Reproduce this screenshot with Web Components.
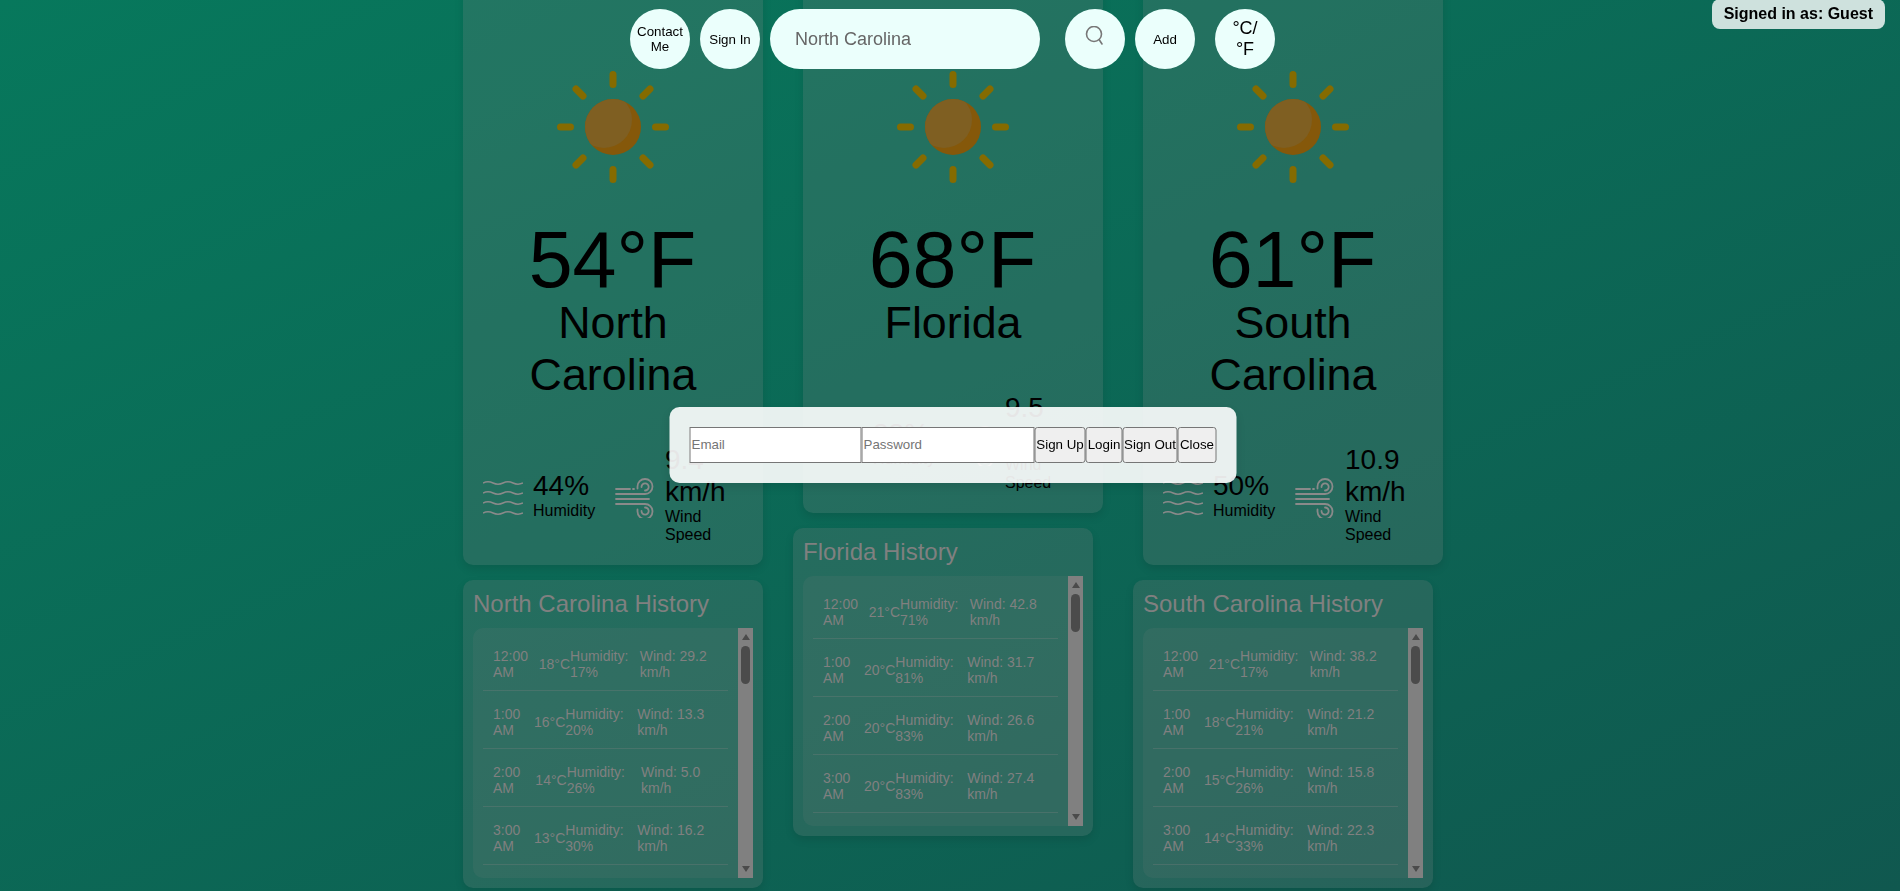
<!DOCTYPE html>
<html lang="en">
<head>
<meta charset="utf-8">
<title>Weather</title>
<style>
html, body { margin: 0; height: 100%; overflow: hidden; }
body {
    font-family: "Liberation Sans", Arial, sans-serif;
    background: linear-gradient(156deg, #07785c, #10584f);
}
</style>
</head>
<body>
<weather-app></weather-app>

<script>
const SUN_ICON = `
<svg width="150" height="150" viewBox="-75 -75 150 150">
    <defs><clipPath id="disc"><circle r="28"></circle></clipPath></defs>
    <g stroke="#856b00" stroke-width="7" stroke-linecap="round">
        <path d="M0 -52.5V-42.5M0 42.5V52.5M-52.5 0H-42.5M42.5 0H52.5"></path>
        <path d="M-37 -38L-30 -31M37 -38L30 -31M-37 38L-30 31M37 38L30 31"></path>
    </g>
    <circle r="28" fill="#85580a"></circle>
    <circle cx="-9" cy="-7" r="28" fill="#7f5f22" clip-path="url(#disc)"></circle>
</svg>`;

const WATER_ICON = `
<svg width="40" height="34" viewBox="0 0 40 34" fill="none" stroke="#8a8a8a" stroke-width="1.4">
    <path d="M0 2q5 -2.4 10 0t10 0t10 0t10 0"></path>
    <path d="M0 12q5 -2.4 10 0t10 0t10 0t10 0"></path>
    <path d="M0 22q5 -2.4 10 0t10 0t10 0t10 0"></path>
    <path d="M0 32q5 -2.4 10 0t10 0t10 0t10 0"></path>
</svg>`;

const WIND_ICON = `
<svg width="40" height="40" viewBox="0 0 40 40" fill="none" stroke="#8a8a8a" stroke-width="1.8" stroke-linecap="round">
    <path d="M1 11H15M18 11H19"></path>
    <path d="M1 16H30a7.5 7.5 0 1 0 -7.5 -7.5v2"></path>
    <path d="M26.5 9a3.6 3.6 0 1 1 3.5 3.5"></path>
    <path d="M1 21H34"></path>
    <path d="M1 26H30a7.5 7.5 0 1 1 -7.5 7.5v-2"></path>
    <path d="M26.5 33a3.6 3.6 0 1 0 3.5 -3.5"></path>
</svg>`;

const SEARCH_ICON = `
<svg width="24" height="24" viewBox="0 0 24 24" fill="none" stroke="#777" stroke-width="1.6" stroke-linecap="round">
    <circle cx="11" cy="8" r="7.5"></circle>
    <path d="M16.2 13.7L19 18"></path>
</svg>`;

const LOCATIONS = [
    {
        name: "North Carolina", temp: "54°F", humidity: "44%", wind: "9.4 km/h", offset: 0,
        history: [
            ["12:00 AM", "18°C", "17%", "29.2"],
            ["1:00 AM", "16°C", "20%", "13.3"],
            ["2:00 AM", "14°C", "26%", "5.0"],
            ["3:00 AM", "13°C", "30%", "16.2"]
        ]
    },
    {
        name: "Florida", temp: "68°F", humidity: "88%", wind: "9.5 km/h", offset: -10,
        history: [
            ["12:00 AM", "21°C", "71%", "42.8"],
            ["1:00 AM", "20°C", "81%", "31.7"],
            ["2:00 AM", "20°C", "83%", "26.6"],
            ["3:00 AM", "20°C", "83%", "27.4"]
        ]
    },
    {
        name: "South Carolina", temp: "61°F", humidity: "50%", wind: "10.9 km/h", offset: -10,
        history: [
            ["12:00 AM", "21°C", "17%", "38.2"],
            ["1:00 AM", "18°C", "21%", "21.2"],
            ["2:00 AM", "15°C", "26%", "15.8"],
            ["3:00 AM", "14°C", "33%", "22.3"]
        ]
    }
];

class RoundButton extends HTMLElement {
    constructor () {
        super();
        this.attachShadow({mode: "open"});
        this.shadowRoot.innerHTML = `
        <style>
        :host { display: block; flex: none; }
        button {
            display: flex;
            align-items: center;
            justify-content: center;
            width: 60px;
            height: 60px;
            padding: 0 6px;
            border: none;
            border-radius: 50%;
            background: #ebfffc;
            color: #000;
            font: 13.33px "Liberation Sans", Arial, sans-serif;
        }
        :host([large]) button { font-size: 18px; }
        </style>
        <button><span><slot></slot></span></button>
        `;
    }
}

class SearchBar extends HTMLElement {
    constructor () {
        super();
        this.attachShadow({mode: "open"});
        this.shadowRoot.innerHTML = `
        <style>
        :host {
            display: flex;
            justify-content: center;
            position: fixed;
            top: 9px;
            left: 5px;
            right: 0;
            z-index: 5;
        }
        .gap10 { margin-left: 10px; }
        .gap20 { margin-left: 20px; }
        .gap25 { margin-left: 25px; }
        input {
            box-sizing: border-box;
            width: 270px;
            height: 60px;
            margin-left: 10px;
            padding: 0 25px;
            border: none;
            border-radius: 30px;
            background: #ebfffc;
            color: #666;
            font: 18px "Liberation Sans", Arial, sans-serif;
            outline: none;
        }
        </style>
        <round-button>Contact Me</round-button>
        <round-button class="gap10">Sign In</round-button>
        <input type="text" value="North Carolina" aria-label="Search">
        <round-button class="gap25">${SEARCH_ICON}</round-button>
        <round-button class="gap10">Add</round-button>
        <round-button class="gap20" large>°C/<br>°F</round-button>
        `;
    }
}

class UserBadge extends HTMLElement {
    constructor () {
        super();
        this.attachShadow({mode: "open"});
        this.shadowRoot.innerHTML = `
        <style>
        :host {
            display: block;
            position: fixed;
            top: -1px;
            right: 15px;
            z-index: 5;
            padding: 6px 12px;
            border-radius: 8px;
            background: rgba(255, 255, 255, 0.8);
            color: #000;
            font-size: 16px;
            font-weight: bold;
        }
        </style>
        <slot></slot>
        `;
    }
}

class AuthModal extends HTMLElement {
    constructor () {
        super();
        this.attachShadow({mode: "open"});
        this.shadowRoot.innerHTML = `
        <style>
        :host {
            display: flex;
            position: fixed;
            top: calc(50% - 1px);
            left: calc(50% + 3px);
            transform: translate(-50%, -50%);
            z-index: 10;
            padding: 20px;
            border-radius: 10px;
            background: rgba(255, 255, 255, 0.9);
            box-shadow: 0 4px 8px rgba(0, 0, 0, 0.1);
        }
        input, button {
            box-sizing: border-box;
            height: 36px;
            margin: 0;
            font: 13.33px "Liberation Sans", Arial, sans-serif;
        }
        input {
            width: 172px;
            padding: 1px;
            border: 1px solid #767676;
            background: #fff;
        }
        input[type=password] { width: 173px; }
        button {
            padding: 0;
            border: 1px solid #767676;
            border-radius: 3px;
            background: #efefef;
            color: #000;
            white-space: nowrap;
        }
        </style>
        <input type="email" placeholder="Email">
        <input type="password" placeholder="Password">
        <button style="width: 51px">Sign Up</button>
        <button style="width: 37px">Login</button>
        <button style="width: 55px">Sign Out</button>
        <button style="width: 39px">Close</button>
        `;
    }
}

class WeatherCard extends HTMLElement {
    constructor () {
        super();
        this.attachShadow({mode: "open"});
    }

    connectedCallback () {
        this.shadowRoot.innerHTML = `
        <style>
        :host {
            display: block;
            width: 300px;
            box-sizing: border-box;
            padding: 20px 20px 21px;
            border-radius: 10px;
            background: rgba(128, 128, 128, 0.22);
            box-shadow: 0 4px 8px rgba(0, 0, 0, 0.1);
            color: #000;
        }
        .sun { display: flex; justify-content: center; margin-top: 52px; height: 150px; }
        .temp { margin: 16px 1px 0 0; font-size: 79px; line-height: 84px; text-align: center; }
        .name { margin-top: -6px; font-size: 44.8px; line-height: 52px; text-align: center; }
        .details {
            display: grid;
            grid-template-columns: 132px 1fr;
            margin-top: 44px;
        }
        .col { display: flex; align-items: center; gap: 10px; }
        .col svg { flex: none; margin-top: 8px; }
        .humidity-text { margin-top: 2px; }
        .value { font-size: 28px; line-height: 32px; }
        .label { font-size: 16px; line-height: 18px; }
        .wind-text { width: 78px; }
        </style>
        <div class="sun">${SUN_ICON}</div>
        <div class="temp">${this.getAttribute("temp")}</div>
        <div class="name">${this.getAttribute("name")}</div>
        <div class="details">
            <div class="col">
                ${WATER_ICON}
                <div class="humidity-text">
                    <div class="value">${this.getAttribute("humidity")}</div>
                    <div class="label">Humidity</div>
                </div>
            </div>
            <div class="col">
                ${WIND_ICON}
                <div class="wind-text">
                    <div class="value">${this.getAttribute("wind")}</div>
                    <div class="label">Wind Speed</div>
                </div>
            </div>
        </div>
        `;
    }
}

class HistoryRow extends HTMLElement {
    constructor () {
        super();
        this.attachShadow({mode: "open"});
    }

    connectedCallback () {
        this.shadowRoot.innerHTML = `
        <style>
        :host {
            display: flex;
            justify-content: space-between;
            align-items: center;
            margin-bottom: 5px;
            padding: 10px;
            border-bottom: 1px solid rgba(128, 128, 128, 0.3);
            color: #808080;
            font-size: 14px;
            line-height: 16px;
        }
        </style>
        <span>${this.getAttribute("time")}</span>
        <span>${this.getAttribute("temp")}</span>
        <span>Humidity: ${this.getAttribute("humidity")}</span>
        <span>Wind: ${this.getAttribute("wind")} km/h</span>
        `;
    }
}

class ListScrollbar extends HTMLElement {
    constructor () {
        super();
        this.attachShadow({mode: "open"});
        this.shadowRoot.innerHTML = `
        <style>
        :host {
            display: flex;
            flex: none;
            flex-direction: column;
            align-items: center;
            width: 15px;
            background: #808080;
        }
        .arrow { display: flex; flex: none; align-items: center; justify-content: center; height: 18px; }
        .arrow i { border: 4.5px solid transparent; border-top: 0; border-bottom: 6px solid #4b4b4b; }
        .arrow.down i { border-top: 6px solid #4b4b4b; border-bottom: 0; }
        .thumb { flex: none; width: 9px; height: 38px; border-radius: 5px; background: #4b4b4b; }
        .rest { flex: 1; }
        </style>
        <div class="arrow"><i></i></div>
        <div class="thumb"></div>
        <div class="rest"></div>
        <div class="arrow down"><i></i></div>
        `;
    }
}

class HistoryPanel extends HTMLElement {
    constructor () {
        super();
        this.attachShadow({mode: "open"});
        this.shadowRoot.innerHTML = `
        <style>
        :host {
            display: block;
            box-sizing: border-box;
            width: 300px;
            padding: 10px;
            border-radius: 10px;
            background: rgba(128, 128, 128, 0.22);
            box-shadow: 0 4px 8px rgba(0, 0, 0, 0.1);
        }
        h3 {
            margin: 0 0 10px;
            color: #808080;
            font-size: 24px;
            line-height: 28px;
            font-weight: normal;
        }
        .list {
            display: flex;
            height: 250px;
            border-radius: 10px 0 0 10px;
            background: rgba(128, 128, 128, 0.12);
        }
        .rows { flex: 1; min-width: 0; padding: 10px; overflow: hidden; }
        </style>
        <h3><slot name="title"></slot></h3>
        <div class="list">
            <div class="rows"><slot></slot></div>
            <list-scrollbar></list-scrollbar>
        </div>
        `;
    }
}

class WeatherColumn extends HTMLElement {
    constructor () {
        super();
        this.attachShadow({mode: "open"});
    }

    set location (loc) {
        let rows = "";
        for(let r of loc.history) {
            rows += `<history-row time="${r[0]}" temp="${r[1]}" humidity="${r[2]}" wind="${r[3]}"></history-row>`;
        }

        this.shadowRoot.innerHTML = `
        <style>
        :host { display: block; width: 300px; }
        history-panel { margin: 15px 0 0 ${loc.offset}px; }
        </style>
        <weather-card name="${loc.name}" temp="${loc.temp}" humidity="${loc.humidity}" wind="${loc.wind}"></weather-card>
        <history-panel>
            <span slot="title">${loc.name} History</span>
            ${rows}
        </history-panel>
        `;
    }
}

class WeatherApp extends HTMLElement {
    constructor () {
        super();
        this.attachShadow({mode: "open"});
        this.shadowRoot.innerHTML = `
        <style>
        :host { display: block; }
        main {
            display: flex;
            justify-content: center;
            align-items: flex-start;
            gap: 40px;
            margin-top: -20px;
            padding-left: 6px;
        }
        </style>
        <search-bar></search-bar>
        <user-badge>Signed in as: Guest</user-badge>
        <main></main>
        <auth-modal></auth-modal>
        `;
    }

    connectedCallback () {
        let main = this.shadowRoot.querySelector("main");
        for(let loc of LOCATIONS) {
            let column = document.createElement("weather-column");
            main.append(column);
            column.location = loc;
        }
    }
}

customElements.define("round-button", RoundButton);
customElements.define("search-bar", SearchBar);
customElements.define("user-badge", UserBadge);
customElements.define("auth-modal", AuthModal);
customElements.define("weather-card", WeatherCard);
customElements.define("history-row", HistoryRow);
customElements.define("list-scrollbar", ListScrollbar);
customElements.define("history-panel", HistoryPanel);
customElements.define("weather-column", WeatherColumn);
customElements.define("weather-app", WeatherApp);
</script>
</body>
</html>
